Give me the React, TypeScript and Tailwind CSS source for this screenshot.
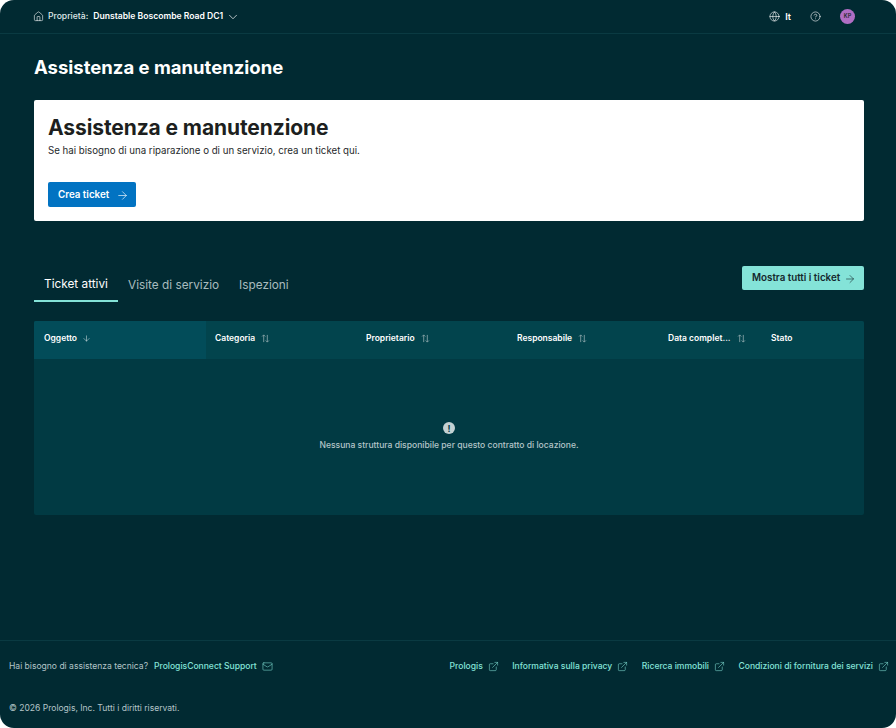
import { ArrowDown, ArrowRight, ChevronDown, CircleHelp, ExternalLink, Globe, Home, Mail } from 'lucide-react';

const columns = [
  { label: 'Categoria', width: 'w-[151px]' },
  { label: 'Proprietario', width: 'w-[151px]' },
  { label: 'Responsabile', width: 'w-[151px]' },
  { label: 'Data complet...', width: 'w-[103px]' },
];

const footerLinks = ['Prologis', 'Informativa sulla privacy', 'Ricerca immobili', 'Condizioni di fornitura dei servizi'];

function SortIcon() {
  return (
    <svg width="9" height="9" viewBox="0 0 10 10" fill="none" stroke="#8fa9ad" strokeWidth="0.9" className="shrink-0">
      <path d="M3 9V1M1.2 2.8 3 1l1.8 1.8M7 1v8M5.2 7.2 7 9l1.8-1.8" />
    </svg>
  );
}

export default function App() {
  return (
    <div className="h-[728px] w-[896px] bg-white font-['Inter',sans-serif]">
      <div className="flex h-full flex-col overflow-hidden rounded-[14px] bg-[#012a32]">
        {/* Top bar */}
        <header className="flex h-[34px] shrink-0 items-center justify-between border-b border-[#0a3a42] pl-[33px] pr-[41px]">
          <div className="flex items-center text-[8.6px] font-semibold text-white">
            <Home size={11} strokeWidth={1.3} className="mr-[4px]" />
            <span className="mr-[5px] font-medium text-[#dfe8e9]">Proprietà:</span>
            <span>Dunstable Boscombe Road DC1</span>
            <ChevronDown size={14} strokeWidth={1.2} className="ml-[3px]" />
          </div>
          <div className="flex items-center text-white">
            <Globe size={11} strokeWidth={1.3} />
            <span className="ml-[5px] text-[9px] font-semibold">It</span>
            <CircleHelp size={11} strokeWidth={1.3} className="ml-[19px]" />
            <div className="ml-[19px] flex h-[15px] w-[15px] items-center justify-center rounded-full bg-[#b06ec4] text-[5.5px] font-semibold text-[#1d2b30]">
              KP
            </div>
          </div>
        </header>

        <main className="flex-1 pl-[34px] pr-[32px]">
          <h1 className="mt-[20px] text-[18.5px] leading-[26px] font-bold text-white">Assistenza e manutenzione</h1>

          {/* Intro card */}
          <section className="mt-[20px] h-[121px] rounded-[2px] bg-white pl-[14px] pt-[14px]">
            <h2 className="text-[21px] leading-[27px] font-bold tracking-[-0.1px] text-[#1d1f20]">Assistenza e manutenzione</h2>
            <p className="mt-[3px] text-[9.7px] leading-[14px] text-[#26292b]">
              Se hai bisogno di una riparazione o di un servizio, crea un ticket qui.
            </p>
            <button className="mt-[24px] flex h-[25px] w-[88px] items-center gap-[7px] rounded-[2px] bg-[#0273c2] pl-[10px] pt-[1px] text-[9.8px] font-semibold text-white">
              Crea ticket
              <ArrowRight size={13} strokeWidth={1.2} />
            </button>
          </section>

          {/* Tabs */}
          <div className="mt-[45px] flex items-center justify-between">
            <div className="flex h-[36px] items-start text-[11.8px] text-[#a9bcbf]">
              <div className="h-[36px] w-[84px] border-b-2 border-[#84e3d8] pt-[10px] text-center leading-[16px] text-white">Ticket attivi</div>
              <div className="ml-[10px] pt-[11px] leading-[16px]">Visite di servizio</div>
              <div className="ml-[20px] pt-[11px] leading-[16px]">Ispezioni</div>
            </div>
            <button className="mb-[12px] flex h-[24px] w-[122px] items-center gap-[4px] rounded-[2px] bg-[#84e3d8] pl-[10px] pt-[1px] text-[9.8px] font-semibold text-[#15282d]">
              Mostra tutti i ticket
              <ArrowRight size={12} strokeWidth={1.2} />
            </button>
          </div>

          {/* Table */}
          <section className="mt-[19px] overflow-hidden rounded-[2px] bg-[#013a43]">
            <div className="flex h-[38px] items-center bg-[#02444d] text-[8.5px] font-semibold text-white">
              <div className="flex h-full w-[172px] items-center gap-[5px] bg-[#024c59] pb-[4px] pl-[10px]">
                Oggetto
                <ArrowDown size={9} strokeWidth={1.2} />
              </div>
              {columns.map((col) => (
                <div key={col.label} className={`flex h-full items-center gap-[6px] pb-[4px] pl-[9px] ${col.width}`}>
                  {col.label}
                  <SortIcon />
                </div>
              ))}
              <div className="pb-[4px] pl-[9px]">Stato</div>
            </div>
            <div className="flex h-[156px] flex-col items-center pt-[63px] text-[8.55px] font-medium text-[#b4c5c8]">
              <div className="flex h-[12px] w-[12px] items-center justify-center rounded-full bg-[#c3d1d3] text-[9px] leading-none font-bold text-[#013a43]">!</div>
              <p className="mt-[5px] leading-[12px]">Nessuna struttura disponibile per questo contratto di locazione.</p>
            </div>
          </section>
        </main>

        {/* Footer */}
        <footer className="h-[88px] shrink-0 border-t border-[#0a3a42] pl-[9px] pr-[7px] text-[8.55px]">
          <div className="mt-[19px] flex items-center justify-between">
            <div className="flex items-center">
              <span className="text-[#b4c5c8]">Hai bisogno di assistenza tecnica?</span>
              <span className="ml-[6px] font-medium text-[#84e3d8]">PrologisConnect Support</span>
              <Mail size={11} strokeWidth={1.2} className="ml-[5px] text-[#84e3d8]" />
            </div>
            <div className="flex items-center gap-[13.5px] font-medium text-[#84e3d8]">
              {footerLinks.map((link) => (
                <span key={link} className="flex items-center gap-[5px]">
                  {link}
                  <ExternalLink size={11} strokeWidth={1.2} />
                </span>
              ))}
            </div>
          </div>
          <p className="mt-[29px] leading-[12px] text-[#b4c5c8]">© 2026 Prologis, Inc. Tutti i diritti riservati.</p>
        </footer>
      </div>
    </div>
  );
}
